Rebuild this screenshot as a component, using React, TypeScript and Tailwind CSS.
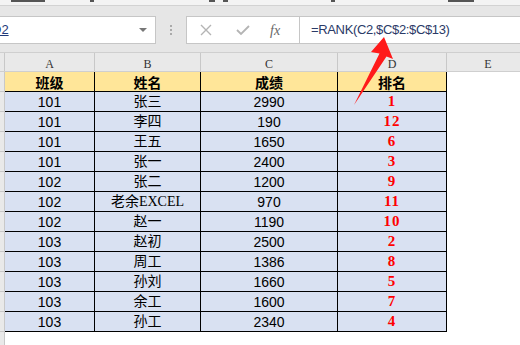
import React from 'react';

const rows: [string, string, string, string][] = [
  ['101', '张三', '2990', '1'],
  ['101', '李四', '190', '12'],
  ['101', '王五', '1650', '6'],
  ['101', '张一', '2400', '3'],
  ['102', '张二', '1200', '9'],
  ['102', '老余EXCEL', '970', '11'],
  ['102', '赵一', '1190', '10'],
  ['103', '赵初', '2500', '2'],
  ['103', '周工', '1386', '8'],
  ['103', '孙刘', '1660', '5'],
  ['103', '余工', '1600', '7'],
  ['103', '孙工', '2340', '4'],
];

const cjk = { fontFamily: '"Noto Sans CJK SC", sans-serif' };
const num = { fontFamily: '"Liberation Sans", "Noto Sans CJK SC", sans-serif' };
const serif = { fontFamily: '"Liberation Serif", "Noto Sans CJK SC", serif' };

export default function App() {
  return (
    <div className="relative w-[520px] h-[345px] overflow-hidden bg-white">
      {/* bottom edge of the ribbon, cut off */}
      <div className="h-[6px] bg-[#f3f3f3] border-b border-[#d2d2d2] flex items-start">
        <span className="ml-[11px] w-[34px] h-[2px] bg-[#555]" />
        <span className="ml-[45px] w-[4px] h-[2px] bg-[#555]" />
        <span className="ml-[115px] w-[6px] h-[2px] bg-[#555]" />
        <span className="ml-[8px] w-[5px] h-[2px] bg-[#555]" />
        <span className="ml-[103px] w-[4px] h-[2px] bg-[#555]" />
        <span className="ml-[113px] w-[26px] h-[2px] bg-[#555]" />
      </div>

      {/* formula bar */}
      <div className="h-[46px] bg-[#e6e6e6] flex items-start pt-[10px]">
        <div className="-ml-px w-[157px] h-[28px] bg-white border border-[#c6c6c6] flex items-center overflow-hidden">
          <span className="-ml-[8px] text-[13px] text-[#1f3a7a] underline" style={num}>D2</span>
          <span className="ml-auto mr-[8px] w-0 h-0 border-l-[4px] border-r-[4px] border-t-[4px] border-l-transparent border-r-transparent border-t-[#777]" />
        </div>
        <div className="w-[30px] h-[28px] flex flex-col items-center justify-center gap-[2px]">
          <span className="w-[2px] h-[2px] bg-[#aaa]" />
          <span className="w-[2px] h-[2px] bg-[#aaa]" />
          <span className="w-[2px] h-[2px] bg-[#aaa]" />
        </div>
        <div className="w-[114px] h-[28px] bg-white border border-[#c6c6c6] flex items-center">
          <svg width="12" height="12" viewBox="0 0 12 12" className="ml-[13px]">
            <path d="M1 1L11 11M11 1L1 11" stroke="#b4b4b4" strokeWidth="1.4" />
          </svg>
          <svg width="14" height="12" viewBox="0 0 14 12" className="ml-[24px]">
            <path d="M1 6L5 10L13 2" stroke="#b4b4b4" strokeWidth="1.8" fill="none" />
          </svg>
          <span className="ml-[20px] text-[14px] italic text-[#666]" style={serif}>fx</span>
        </div>
        <div className="flex-1 h-[28px] -ml-px bg-white border border-r-0 border-[#c6c6c6] flex items-center">
          <span className="ml-[11px] text-[13px] tracking-[-0.35px] text-[#2b3a67]" style={num}>
            =RANK(C2,$C$2:$C$13)
          </span>
        </div>
      </div>

      {/* column letters */}
      <div className="flex h-[20px] bg-[#e9e9e9] border-t border-b border-[#cfcfcf] text-[12px] text-[#333] leading-none" style={serif}>
        <div className="w-[5px] shrink-0 border-r border-[#c8c8c8]" />
        <div className="w-[90px] shrink-0 border-r border-[#c8c8c8] flex items-center justify-center pt-[3px]">A</div>
        <div className="w-[106px] shrink-0 border-r border-[#c8c8c8] flex items-center justify-center pt-[3px]">B</div>
        <div className="w-[137px] shrink-0 border-r border-[#c8c8c8] flex items-center justify-center pt-[3px]">C</div>
        <div className="w-[109px] shrink-0 border-r border-[#c8c8c8] flex items-center justify-center pt-[3px]">D</div>
        <div className="w-[82px] shrink-0 flex items-center justify-center pt-[3px]">E</div>
      </div>

      {/* header row */}
      <div className="flex h-[20px] text-[14px] font-bold text-black leading-none" style={cjk}>
        <div className="w-[5px] shrink-0 bg-[#e9e9e9] border-r border-b border-[#c8c8c8]" />
        <div className="w-[90px] shrink-0 bg-[#ffe699] border-r border-b border-black flex items-center justify-center">班级</div>
        <div className="w-[106px] shrink-0 bg-[#ffe699] border-r border-b border-black flex items-center justify-center">姓名</div>
        <div className="w-[137px] shrink-0 bg-[#ffe699] border-r border-b border-black flex items-center justify-center">成绩</div>
        <div className="w-[109px] shrink-0 bg-[#ffe699] border-r border-b border-black flex items-center justify-center">排名</div>
        <div className="flex-1" />
      </div>

      {/* data rows */}
      {rows.map((r, i) => (
        <div key={i} className="flex h-[20px] text-[14px] text-black leading-none">
          <div className="w-[5px] shrink-0 bg-[#e9e9e9] border-r border-b border-[#c8c8c8]" />
          <div className="w-[90px] shrink-0 bg-[#d9e1f2] border-r border-b border-black flex items-center justify-center" style={num}>{r[0]}</div>
          <div className="w-[106px] shrink-0 bg-[#d9e1f2] border-r border-b border-black flex items-center justify-center" style={serif}>{r[1]}</div>
          <div className="w-[137px] shrink-0 bg-[#d9e1f2] border-r border-b border-black flex items-center justify-center" style={num}>{r[2]}</div>
          <div className="w-[109px] shrink-0 bg-[#d9e1f2] border-r border-b border-black flex items-center justify-center font-bold text-[15px] text-[#ff0000] tracking-[1px]" style={serif}>{r[3]}</div>
          <div className="flex-1" />
        </div>
      ))}

      {/* remaining row-header sliver */}
      <div className="flex h-[20px]">
        <div className="w-[5px] shrink-0 bg-[#e9e9e9] border-r border-[#c8c8c8]" />
      </div>

      {/* red arrow */}
      <svg className="absolute inset-0 pointer-events-none" width="520" height="345" viewBox="0 0 520 345">
        <polygon points="384,37 393,59 386.5,56.5 354,105 379.5,53.5 371,52" fill="#ff1a1a" />
      </svg>
    </div>
  );
}
